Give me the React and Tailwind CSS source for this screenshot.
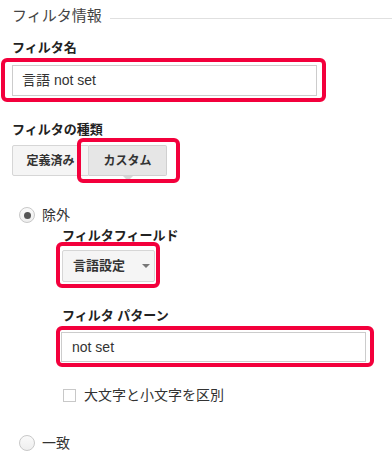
import React from 'react';

const RED = 'border-[#f3003c]';

const Mark = ({ className }) => (
  <span className={`pointer-events-none absolute border-4 ${RED} rounded-[6px] ${className}`} />
);

const Radio = ({ checked, label }) => (
  <div className="flex items-center h-[16px] ml-[7px]">
    <span className="w-[16px] h-[16px] rounded-full border border-[#c8c8c8] bg-gradient-to-b from-[#fafafa] to-[#eeeeee] flex items-center justify-center">
      {checked && <span className="w-[7px] h-[7px] rounded-full bg-[#555]" />}
    </span>
    <span className="ml-[7px] text-[14px] leading-[16px] text-[#333]">{label}</span>
  </div>
);

export default function App() {
  return (
    <div
      className="w-[392px] h-[454px] bg-white overflow-hidden pl-[12px] flex flex-col text-[#333]"
      style={{ fontFamily: '"Liberation Sans", "Noto Sans CJK JP", sans-serif' }}
    >
      {/* section header */}
      <div className="flex mt-[6px] h-[20px]">
        <span className="text-[15px] leading-[20px] text-[#444]">フィルタ情報</span>
        <span className="flex-1 h-px bg-[#e0e0e0] ml-[8px] mt-[12px]" />
      </div>

      <div className="mt-[14px] text-[13px] leading-[16px] font-bold text-[#222]">フィルタ名</div>
      <div className="relative mt-[9px] w-[305px] h-[31px]">
        <div className="w-full h-full border border-[#cccccc] bg-white flex items-center pl-[9px] text-[14px] text-[#333]">
          言語 not set
        </div>
        <Mark className="-left-[11px] -top-[7px] -right-[9px] -bottom-[6px]" />
      </div>

      <div className="mt-[26px] text-[13px] leading-[16px] font-bold text-[#222]">フィルタの種類</div>
      <div className="mt-[7px] flex h-[31px]">
        <div className="w-[77px] h-full border border-[#d6d6d6] bg-[#f5f5f5] rounded-l-[2px] flex items-center justify-center text-[12px] font-bold text-[#333]">
          定義済み
        </div>
        <div className="relative w-[78px] h-full">
          <div className="w-full h-full border border-l-0 border-[#d0d0d0] bg-[#e6e6e6] rounded-r-[2px] flex items-center justify-center text-[12px] font-bold text-[#333]">
            カスタム
          </div>
          <span className="absolute left-[34px] top-[31px] w-0 h-0 border-l-[5px] border-r-[5px] border-t-[5px] border-l-transparent border-r-transparent border-t-[#d6d6d6]" />
          <Mark className="-left-[12px] -top-[7px] -right-[13px] -bottom-[7px]" />
        </div>
      </div>

      <div className="mt-[31px]">
        <Radio checked label="除外" />
      </div>

      <div className="ml-[50px] flex flex-col">
        <div className="mt-[5px] text-[13px] leading-[16px] font-bold text-[#222]">フィルタフィールド</div>
        <div className="relative mt-[6px] w-[93px] h-[32px]">
          <div className="w-full h-full border border-[#d6d6d6] bg-[#f5f5f5] rounded-[2px] flex items-center pl-[10px] text-[13px] font-bold text-[#333]">
            言語設定
            <span className="ml-[17px] w-0 h-0 border-l-[4px] border-r-[4px] border-t-[4px] border-l-transparent border-r-transparent border-t-[#777]" />
          </div>
          <Mark className="-left-[6px] -top-[8px] -right-[5px] -bottom-[6px]" />
        </div>

        <div className="mt-[26px] text-[13px] leading-[16px] font-bold text-[#222]">フィルタ パターン</div>
        <div className="relative mt-[8px] -ml-[1px] w-[305px] h-[30px]">
          <div className="w-full h-full border border-[#cccccc] bg-white flex items-center pl-[10px] text-[14px] text-[#333]">
            not set
          </div>
          <Mark className="-left-[5px] -top-[6px] -right-[8px] -bottom-[5px]" />
        </div>

        <div className="mt-[25px] flex items-center h-[16px] ml-[1px]">
          <span className="w-[13px] h-[13px] border border-[#c8c8c8] bg-white" />
          <span className="ml-[8px] text-[14px] leading-[16px] text-[#333]">大文字と小文字を区別</span>
        </div>
      </div>

      <div className="mt-[32px]">
        <Radio label="一致" />
      </div>
    </div>
  );
}
